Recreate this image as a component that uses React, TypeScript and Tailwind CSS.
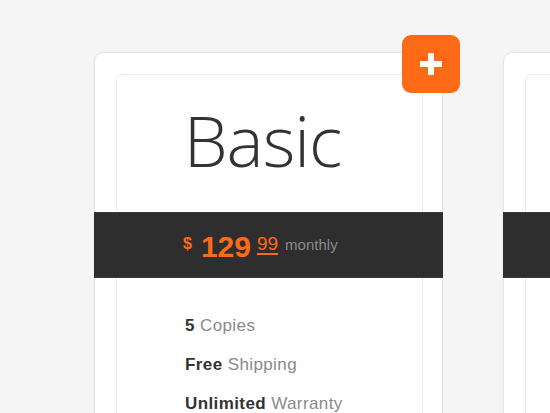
const plans = [
  {
    name: 'Basic',
    dollars: '129',
    cents: '99',
    period: 'monthly',
    features: [
      { strong: '5', rest: 'Copies' },
      { strong: 'Free', rest: 'Shipping' },
      { strong: 'Unlimited', rest: 'Warranty' },
    ],
  },
  {
    name: 'Pro',
    dollars: '249',
    cents: '99',
    period: 'monthly',
    features: [
      { strong: '20', rest: 'Copies' },
      { strong: 'Free', rest: 'Shipping' },
      { strong: 'Unlimited', rest: 'Warranty' },
    ],
  },
];

type Plan = (typeof plans)[number];

function PlusButton() {
  return (
    <button className="absolute -right-[18px] -top-[18px] flex h-[58px] w-[58px] items-center justify-center rounded-[9px] bg-[#ff6a16]">
      <svg width="22" height="22" viewBox="0 0 22 22" fill="#fff">
        <rect x="8" y="0" width="6" height="22" rx="0.5" />
        <rect x="0" y="8" width="22" height="6" rx="0.5" />
      </svg>
    </button>
  );
}

function PlanCard({ plan }: { plan: Plan }) {
  return (
    <div className="relative w-[349px] shrink-0 rounded-[10px] border border-[#e6e6e6] bg-white pl-[21px] pr-[19px] pt-[21px] shadow-[0_0_3px_rgba(0,0,0,0.05)]">
      <PlusButton />
      {/* Title */}
      <div className="flex h-[138px] items-start justify-center rounded-t-[6px] border-x border-t border-[#ececec] pr-[14px] pt-[30px]">
        <h2
          className="text-[70px] font-light leading-none tracking-[-1px] text-[#333]"
          style={{ fontFamily: '"Open Sans", sans-serif' }}
        >
          {plan.name}
        </h2>
      </div>
      {/* Price band */}
      <div
        className="-ml-[22px] -mr-[20px] flex h-[66px] items-start border-y border-[#3a3a3a] bg-[#2e2e2e] pl-[89px] pt-[19px]"
        style={{ fontFamily: '"Liberation Sans", Arial, sans-serif' }}
      >
        <span className="mt-[4px] text-[16px] font-bold leading-none text-[#ff6a16]">$</span>
        <span className="ml-[9px] text-[30px] font-bold leading-none text-[#ff6a16]">{plan.dollars}</span>
        <span className="ml-[6px] mt-[2px] text-[19px] leading-none text-[#ff6a16] underline decoration-[#ff6a16] decoration-[1.5px] underline-offset-[3px]">
          {plan.cents}
        </span>
        <span className="ml-[7px] mt-[5px] text-[15px] leading-none text-[#8a8a8a]">{plan.period}</span>
      </div>
      {/* Features */}
      <ul
        className="border-x border-[#ececec] pb-8 pl-[68px] pt-[28px] text-[17px] leading-[39px] tracking-[0.4px]"
        style={{ fontFamily: '"Liberation Sans", Arial, sans-serif' }}
      >
        {plan.features.map((f) => (
          <li key={f.rest}>
            <span className="font-bold text-[#333]">{f.strong}</span>{' '}
            <span className="text-[#8a8a8a]">{f.rest}</span>
          </li>
        ))}
      </ul>
    </div>
  );
}

export default function App() {
  return (
    <div className="h-[413px] w-full overflow-hidden bg-[#f5f5f5]">
      <div className="flex gap-[60px] pl-[94px] pt-[52px]">
        {plans.map((p) => (
          <PlanCard key={p.name} plan={p} />
        ))}
      </div>
    </div>
  );
}
